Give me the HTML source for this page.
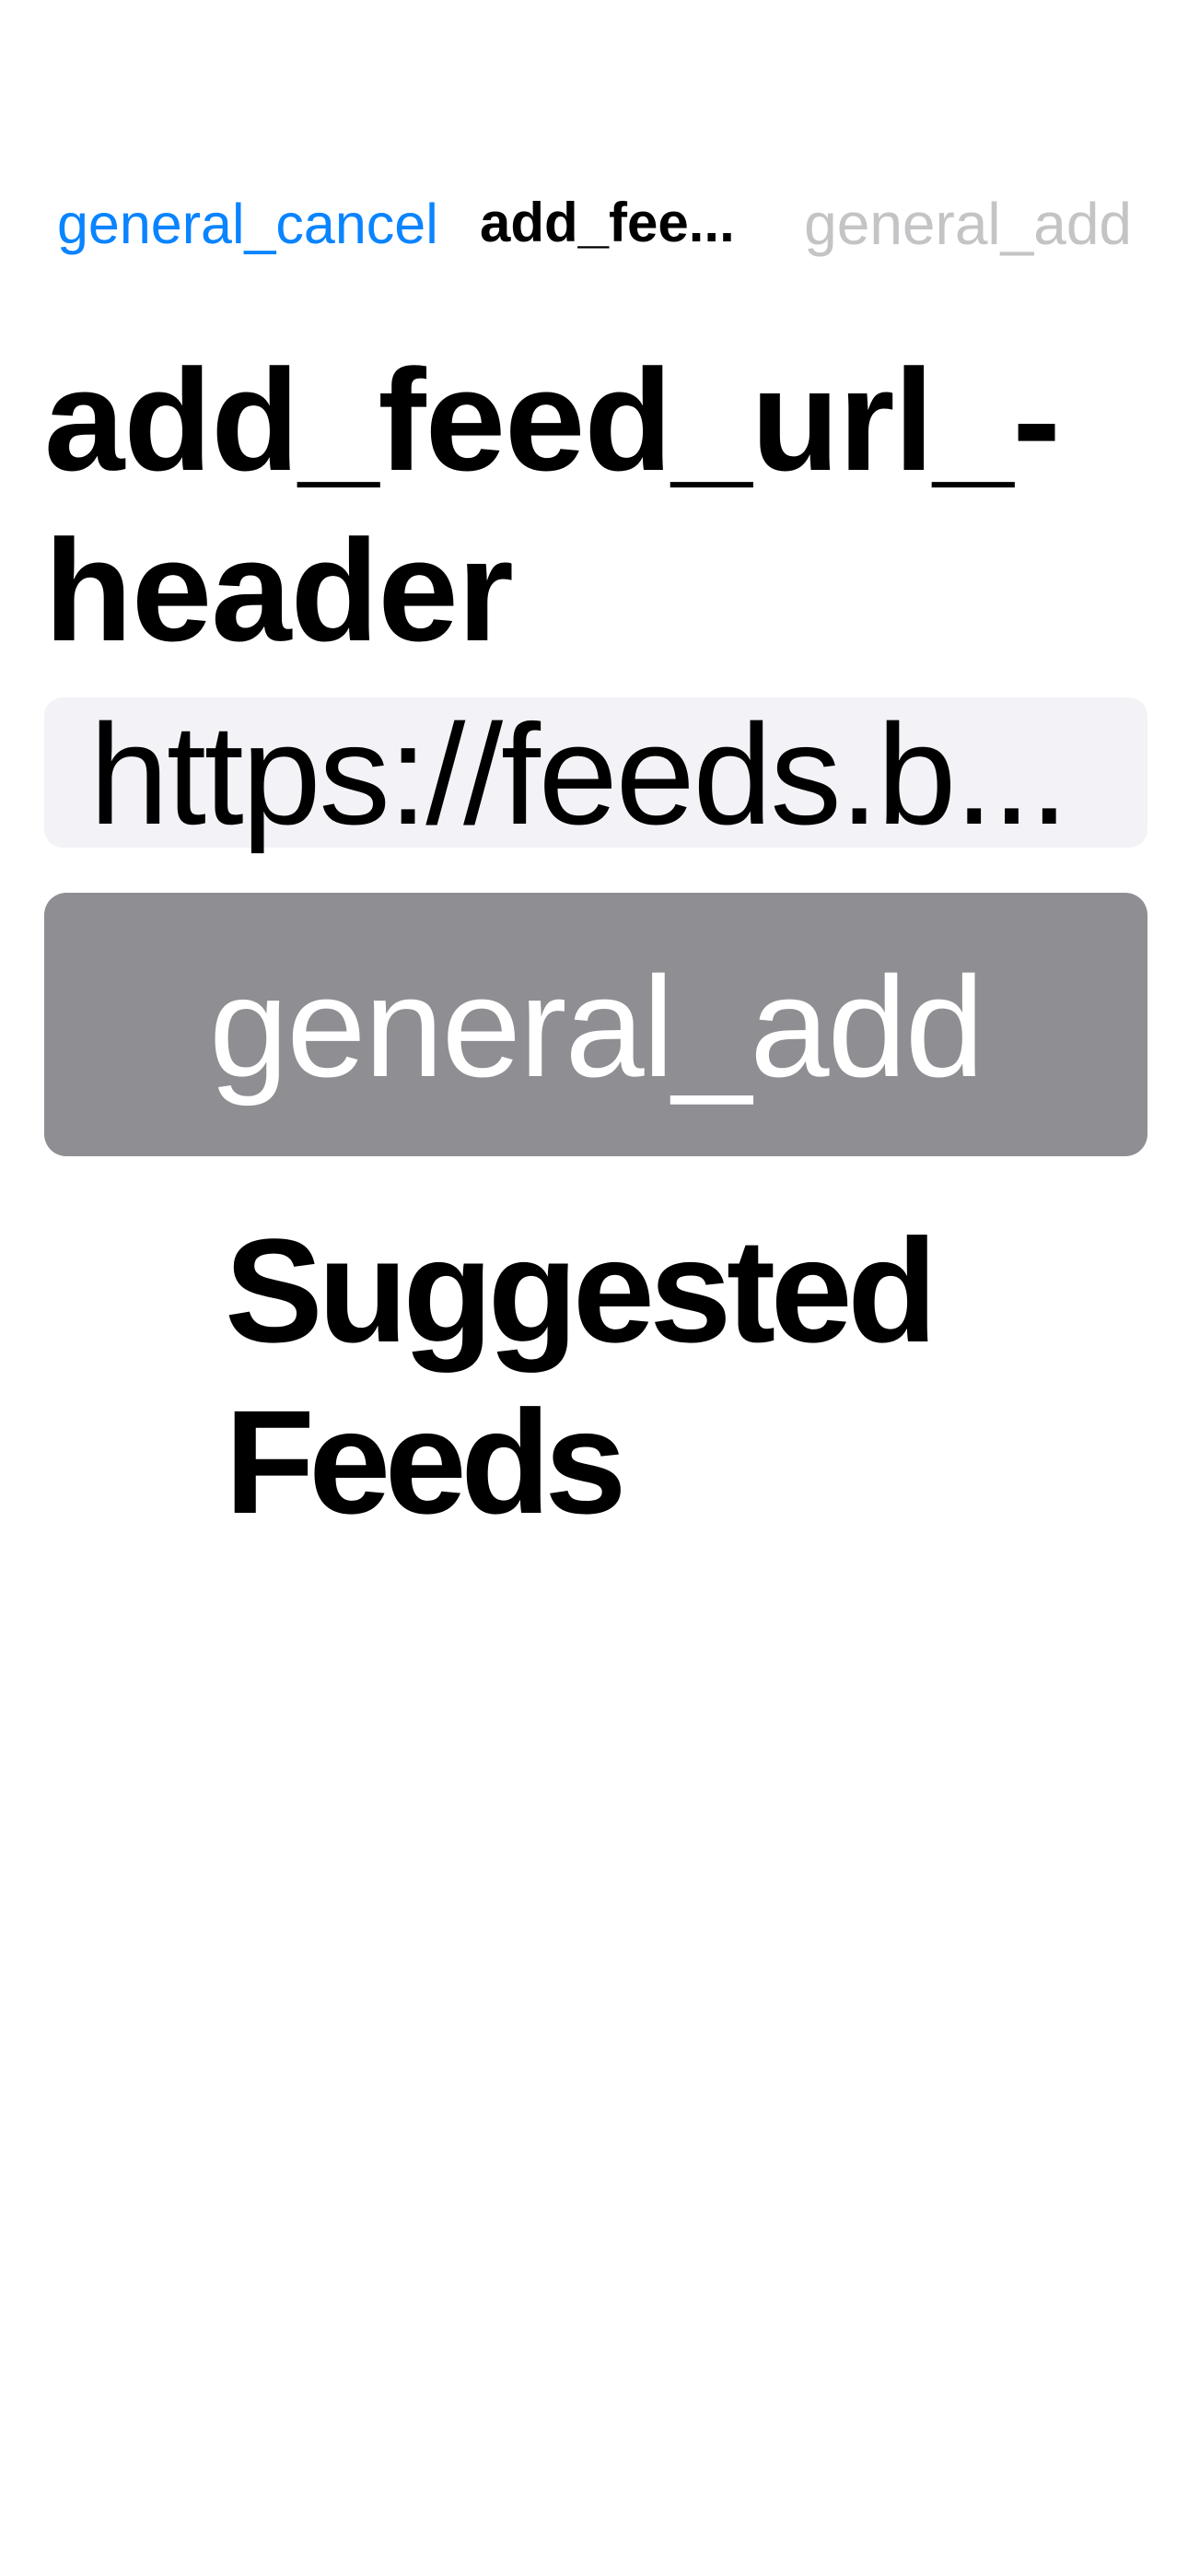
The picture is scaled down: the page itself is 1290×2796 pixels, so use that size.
<!DOCTYPE html>
<html><head><meta charset="utf-8"><style>
html,body{margin:0;padding:0;background:#fff;width:1290px;height:2796px;overflow:hidden;position:relative;font-family:"Liberation Sans",sans-serif}
.t{position:absolute;white-space:nowrap;line-height:1}
</style></head><body>
<div class="t" style="left:62px;top:213px;font-size:61px;color:#0a84ff;">general_cancel</div>
<div class="t" style="left:521px;top:212px;font-size:60px;font-weight:bold;color:#000;">add_fee...</div>
<div class="t" style="right:61px;top:211px;font-size:64px;color:#c4c4c6;">general_add</div>
<div class="t" style="left:48px;top:378px;font-size:157px;font-weight:bold;color:#000;letter-spacing:-1px;">add_feed_url_-</div>
<div class="t" style="left:48px;top:563px;font-size:157px;font-weight:bold;color:#000;letter-spacing:-1px;">header</div>
<div style="position:absolute;left:48px;top:757px;width:1198px;height:163px;background:#f2f2f7;border-radius:20px;"></div>
<div class="t" style="left:97px;top:763px;font-size:155px;color:#000;letter-spacing:-2.3px;">https://feeds.b...</div>
<div style="position:absolute;left:48px;top:969px;width:1198px;height:286px;background:#8e8e93;border-radius:24px;"></div>
<div class="t" style="left:48px;width:1198px;text-align:center;top:1037px;font-size:155px;color:#fff;letter-spacing:-2px;">general_add</div>
<div class="t" style="left:244px;top:1321px;font-size:160px;font-weight:bold;color:#000;letter-spacing:-5.5px;">Suggested</div>
<div class="t" style="left:244px;top:1507px;font-size:160px;font-weight:bold;color:#000;letter-spacing:-6.5px;">Feeds</div>
</body></html>
